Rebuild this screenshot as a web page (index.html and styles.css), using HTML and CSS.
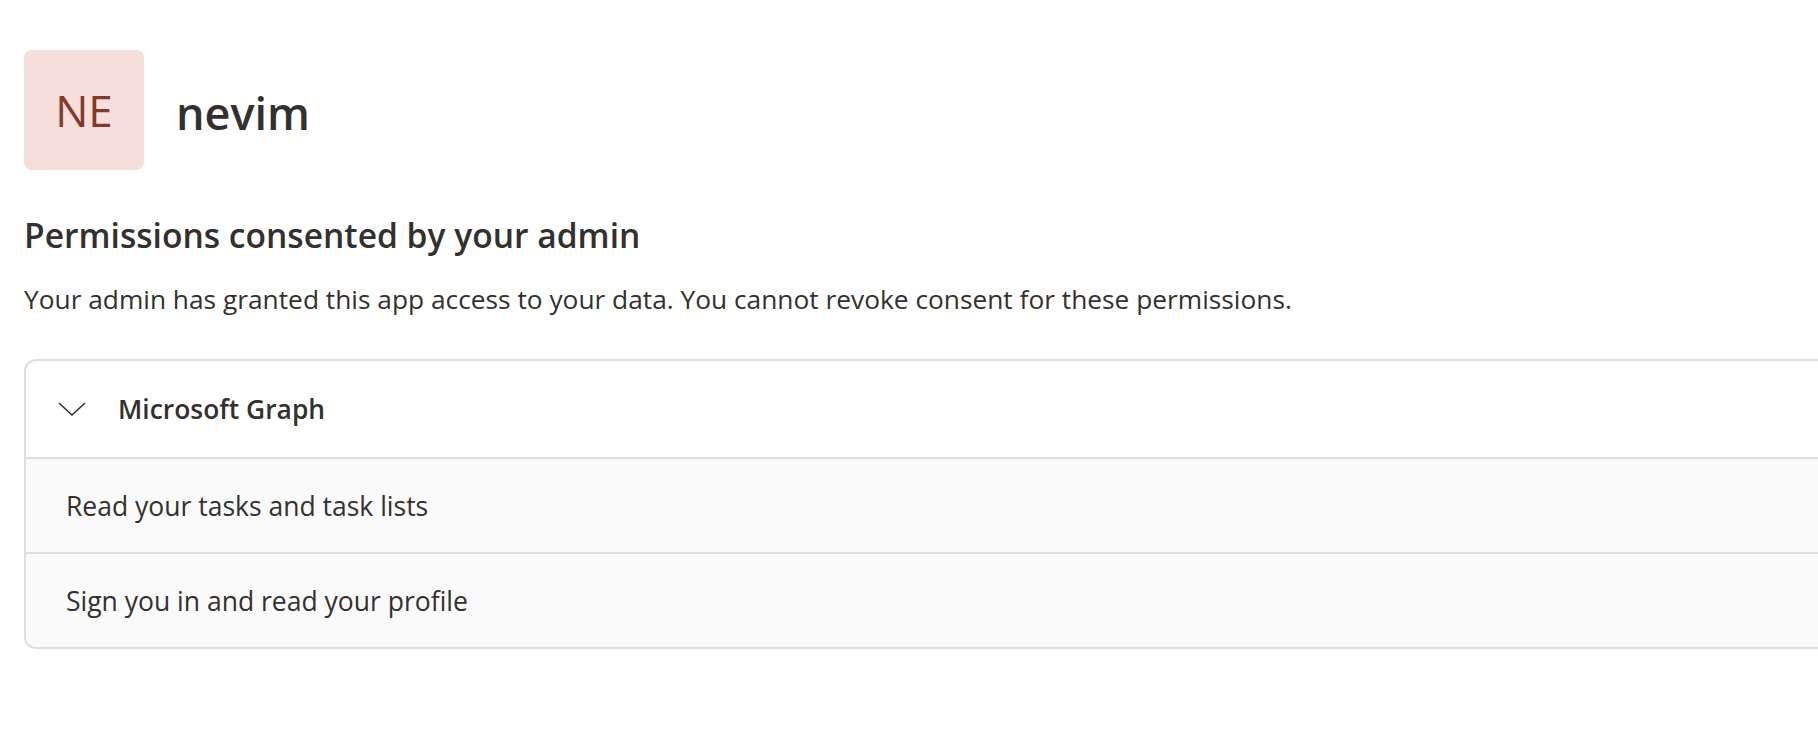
FILE: index.html
```html
<!DOCTYPE html>
<html lang="en">
<head>
    <meta charset="UTF-8">
    <meta name="viewport" content="width=device-width, initial-scale=1.0">
    <title>nevim - permissions</title>
    <link rel="stylesheet" href="styles.css">
</head>
<body>
    <div class="page">
        <div class="app-header">
            <div class="avatar">NE</div>
            <h1 class="app-name">nevim</h1>
        </div>

        <h2 class="section-title">Permissions consented by your admin</h2>
        <p class="section-desc">Your admin has granted this app access to your data. You cannot revoke consent for these permissions.</p>

        <div class="perm-card">
            <div class="perm-group">
                <svg class="chevron" width="28" height="14" viewBox="0 0 28 14">
                    <path d="M1 1 L14 13 L27 1" fill="none" stroke="#323130" stroke-width="1.6"/>
                </svg>
                <span class="group-name">Microsoft Graph</span>
            </div>
            <div class="perm-row">Read your tasks and task lists</div>
            <div class="perm-row">Sign you in and read your profile</div>
        </div>
    </div>
</body>
</html>
```

FILE: styles.css
```css
body {
    margin: 0;
    font-family: "Open Sans", "Noto Sans", sans-serif;
    color: #323130;
    background: #fff;
    overflow: hidden;
}
.page {
    padding: 50px 0 0 24px;
}
.app-header {
    display: flex;
    align-items: center;
    gap: 32px;
}
.avatar {
    width: 120px;
    height: 120px;
    border-radius: 8px;
    background-color: #f6dfda;
    color: #843a2b;
    font-size: 44px;
    display: flex;
    align-items: center;
    justify-content: center;
}
.app-name {
    margin: 0;
    padding-top: 5px;
    font-size: 45px;
    font-weight: 600;
    line-height: 1.2;
}
.section-title {
    margin: 45px 0 0;
    font-size: 33.6px;
    font-weight: 600;
    line-height: 40px;
}
.section-desc {
    margin: 28px 0 0;
    font-size: 26.3px;
    line-height: 32px;
}
.perm-card {
    margin-top: 44px;
    width: 1900px;
    border: 2px solid #dedede;
    border-radius: 12px;
    overflow: hidden;
}
.perm-group {
    height: 96px;
    display: flex;
    align-items: center;
    padding-left: 32px;
    gap: 32px;
    border-bottom: 2px solid #dedede;
}
.group-name {
    font-size: 26.4px;
    font-weight: 600;
}
.perm-row {
    height: 93px;
    display: flex;
    align-items: center;
    padding-left: 40px;
    background-color: #fafafa;
    font-size: 26.5px;
}
.perm-row + .perm-row {
    border-top: 2px solid #dedede;
}
```
